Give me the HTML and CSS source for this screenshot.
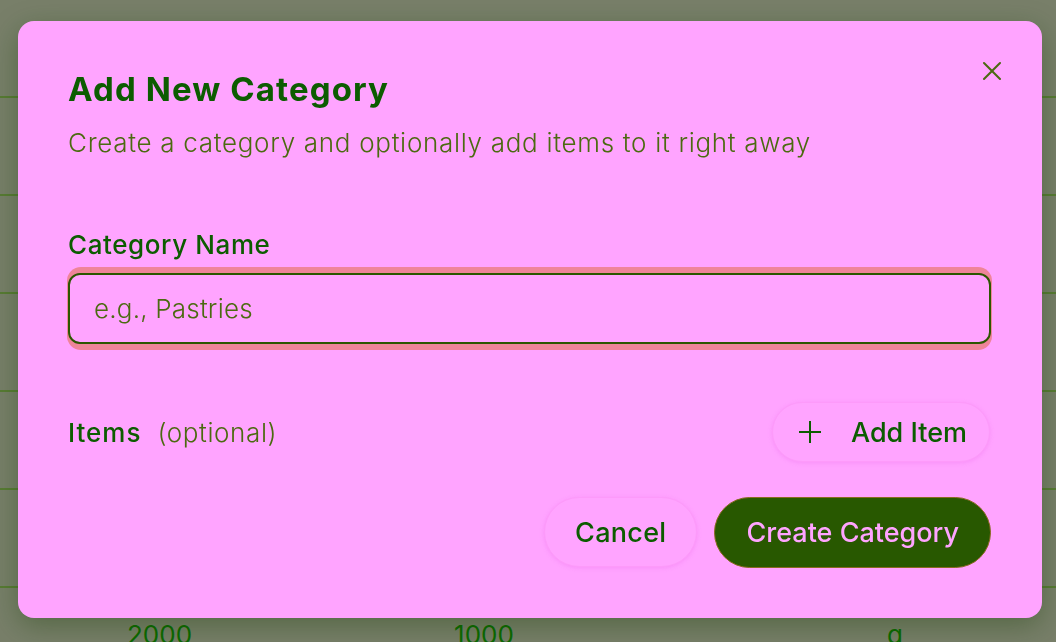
FILE: index.html
```html
<!DOCTYPE html>
<html lang="en">
<head>
<meta charset="utf-8">
<title>Add New Category</title>
<link rel="stylesheet" href="styles.css">
</head>
<body>
<div class="page">
  <div class="table">
    <div class="row"></div>
    <div class="row"></div>
    <div class="row"></div>
    <div class="row"></div>
    <div class="row"></div>
    <div class="row"></div>
    <div class="row last">
      <span class="cell c1">2000</span>
      <span class="cell c2">1000</span>
      <span class="cell c3">g</span>
    </div>
  </div>
</div>
<div class="overlay">
  <div class="dialog" role="dialog" aria-labelledby="dlg-title">
    <button class="close" aria-label="Close">
      <svg width="20" height="20" viewBox="0 0 20 20" fill="none" stroke="currentColor" stroke-width="2" stroke-linecap="round"><path d="M2 2 L18 18 M18 2 L2 18"/></svg>
    </button>
    <h2 id="dlg-title" class="title">Add New Category</h2>
    <p class="subtitle">Create a category and optionally add items to it right away</p>
    <label class="label" for="cat-name">Category Name</label>
    <div class="ring"><input id="cat-name" class="input" type="text" placeholder="e.g., Pastries"></div>
    <div class="items-row">
      <div class="items-label"><span class="items">Items</span><span class="optional">(optional)</span></div>
      <button class="btn ghost add">
        <svg width="22" height="22" viewBox="0 0 22 22" fill="none" stroke="currentColor" stroke-width="2"><path d="M11 0 V22 M0 11 H22"/></svg>
        <span>Add Item</span>
      </button>
    </div>
    <div class="footer">
      <button class="btn ghost cancel">Cancel</button>
      <button class="btn primary">Create Category</button>
    </div>
  </div>
</div>
</body>
</html>
```
FILE: styles.css
```css
* { box-sizing: border-box; }
html, body { margin: 0; padding: 0; }
body {
  width: 1056px;
  height: 642px;
  overflow: hidden;
  background: #787f69;
  font-family: Inter, "Noto Sans", "Liberation Sans", sans-serif;
}
.page { width: 100%; height: 100%; }
.table { display: flex; flex-direction: column; }
.row {
  height: 98px;
  border-bottom: 2px solid #587b34;
}
.row.last {
  border-bottom: none;
  height: 60px;
  display: flex;
  align-items: flex-start;
  padding-top: 32px;
}
.cell {
  font-size: 26px;
  color: #0b6a00;
  line-height: 30px;
}
.c1 { margin-left: 127px; }
.c2 { margin-left: 262px; }
.c3 { margin-left: 373px; }

.overlay {
  position: fixed;
  inset: 0;
  padding: 21px 14px 24px 18px;
  display: flex;
}
.dialog {
  position: relative;
  flex: 1;
  background: #ffa4ff;
  border-radius: 16px;
  padding: 46px 51px 50px 50px;
  display: flex;
  flex-direction: column;
  box-shadow: 0 8px 28px rgba(20, 60, 0, 0.35);
}
.close {
  position: absolute;
  top: 40px;
  right: 40px;
  background: none;
  border: none;
  padding: 0;
  color: #4b6a10;
  width: 20px;
  height: 20px;
  display: flex;
}
.title {
  margin: 0;
  font-size: 33px;
  line-height: 44px;
  font-weight: 700;
  color: #0c5c00;
  letter-spacing: 1.1px;
}
.subtitle {
  margin: 15px 0 0;
  font-size: 26px;
  line-height: 34px;
  font-weight: 300;
  color: #4b6a10;
  letter-spacing: 0.7px;
}
.label {
  margin-top: 69px;
  font-size: 26px;
  line-height: 32px;
  font-weight: 500;
  color: #0c5c00;
  letter-spacing: 0.6px;
}
.ring {
  margin-top: 6px;
  border-radius: 14px;
  background: #ef8499;
  padding: 6px 1px;
  margin-left: -1px;
  margin-right: -1px;
}
.input {
  display: block;
  width: 100%;
  height: 71px;
  border: 2px solid #2c5600;
  border-radius: 12px;
  background: #ffa4ff;
  padding: 0 24px;
  font-family: inherit;
  font-size: 26px;
  font-weight: 300;
  letter-spacing: 0.2px;
  color: #0c5c00;
  outline: none;
}
.input::placeholder { color: #4b6a10; }
.items-row {
  margin-top: 52px;
  display: flex;
  align-items: center;
  justify-content: space-between;
}
.items-label { display: flex; align-items: baseline; gap: 16px; }
.items { font-size: 26px; font-weight: 500; color: #0c5c00; letter-spacing: 1px; }
.optional { font-size: 26px; font-weight: 300; color: #4b6a10; letter-spacing: 0.6px; }
.btn {
  font-family: inherit;
  font-size: 27px;
  font-weight: 500;
  border-radius: 999px;
  cursor: pointer;
  display: flex;
  align-items: center;
}
.ghost {
  background: #ffa4ff;
  color: #0c5c00;
  border: 1px solid #fd9afa;
  box-shadow: 0 1px 4px rgba(240, 120, 240, 0.45);
}
.add {
  height: 60px;
  padding: 0 22px 0 26px;
  gap: 30px;
  margin-right: 1px;
}
.footer {
  margin-top: 35px;
  display: flex;
  justify-content: flex-end;
  gap: 17px;
}
.cancel {
  height: 70px;
  padding: 0 30px;
  letter-spacing: 0.3px;
}
.primary {
  height: 71px;
  padding: 0 31px;
  background: #285800;
  color: #ffa4ff;
  border: 1px solid #8a6a20;
}
```
